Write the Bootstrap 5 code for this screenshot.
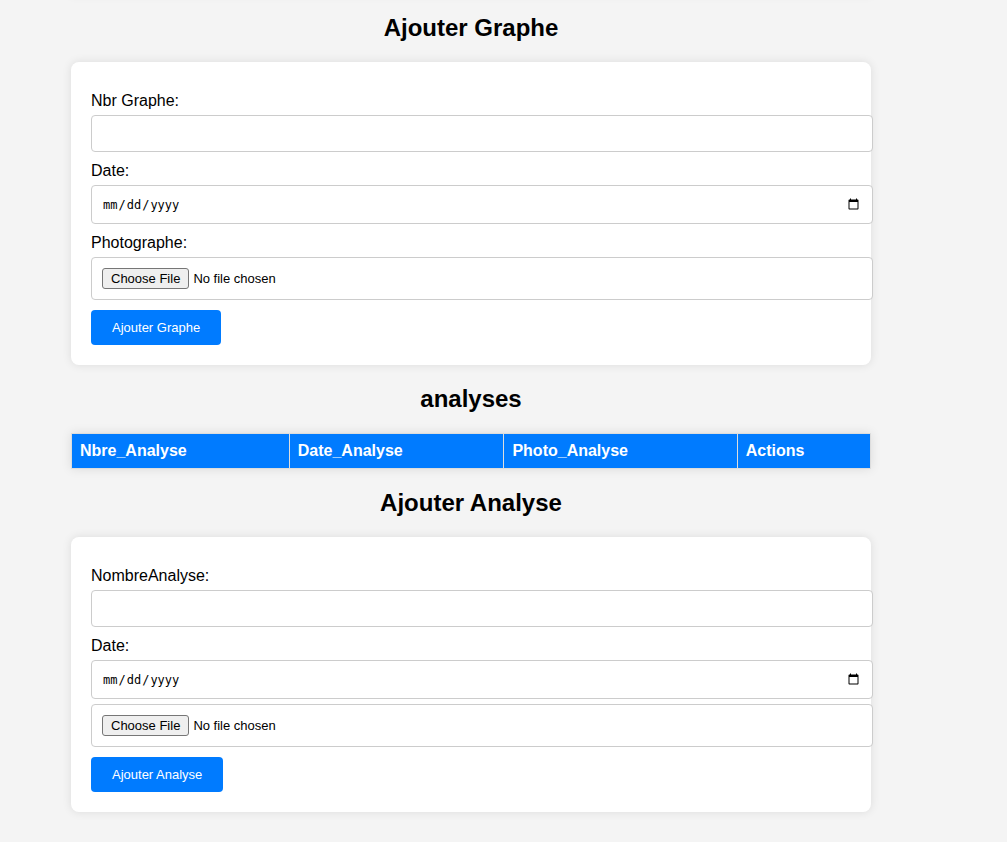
<!DOCTYPE html>
<html lang="fr">
<head>
<meta charset="utf-8">
<meta name="viewport" content="width=device-width, initial-scale=1">
<title>Graphes et analyses</title>
<link href="https://cdn.jsdelivr.net/npm/bootstrap@5.3.0/dist/css/bootstrap.min.css" rel="stylesheet">
<style>
  body { background: #f4f4f4; color: #000; font-family: "Liberation Sans", Arial, sans-serif; font-size: 16px; overflow-x: hidden; }
  .page { padding: 0 136px 0 71px; }
  .panel, .data-grid, .previous-block { box-shadow: 0 0 10px rgba(0, 0, 0, .1); }
  /* bottom of the block scrolled above the view */
  .previous-block { height: 36px; margin: -42px 0 20px; }
  h2 { font-size: 24px; line-height: 28px; font-weight: 700; margin: 0 0 20px; }
  .panel { border: 0; border-radius: 8px; padding: 20px; margin-bottom: 20px; }
  .panel label { line-height: 18px; margin: 10px 0 5px; }
  /* fields keep their padding outside the 100% width */
  .field { box-sizing: content-box; width: 100%; height: 15px; min-height: 0; padding: 10px; border: 1px solid #ccc; border-radius: 4px; font-size: 13px; line-height: 15px; color: #000; }
  .field[type="date"] { height: 17px; font-family: "DejaVu Sans Mono", monospace; font-size: 12px; line-height: 17px; }
  .field[type="date"]::-webkit-datetime-edit { padding: 0; height: 17px; line-height: 19px; }
  .field::-webkit-datetime-edit-month-field, .field::-webkit-datetime-edit-day-field, .field::-webkit-datetime-edit-year-field { padding: 0 1px; }
  .field::-webkit-calendar-picker-indicator { width: 13px; height: 13px; padding: 2px; }
  .field[type="file"] { height: 21px; line-height: 21px; }
  .field + .field { margin-top: 5px; }
  .field[type="file"]::file-selector-button,
  .field[type="file"]:hover:not(:disabled):not([readonly])::file-selector-button { box-sizing: border-box; height: 21px; margin: 0 4px 0 0; padding: 1px 8px; border: 1px solid #767676; border-radius: 3px; background: #efefef; color: #000; font-size: 13px; line-height: 17px; }
  .btn-send { --bs-btn-bg: #007bff; --bs-btn-color: #fff; --bs-btn-hover-bg: #0056b3; --bs-btn-hover-color: #fff; --bs-btn-border-width: 0; --bs-btn-border-radius: 4px; --bs-btn-padding-x: 21px; --bs-btn-padding-y: 10px; --bs-btn-font-size: 13px; --bs-btn-line-height: 15px; margin-top: 10px; }
  .data-grid { width: 100%; border-collapse: collapse; margin-bottom: 20px; }
  .data-grid th { background: #007bff; color: #fff; border: 1px solid #ddd; padding: 8px; line-height: 18px; }
</style>
</head>
<body>
<main class="page">
  <div class="previous-block"></div>

  <h2 class="text-center">Ajouter Graphe</h2>
  <form class="panel card d-block">
    <label class="d-block" for="nbrGraphe">Nbr Graphe:</label>
    <input class="field form-control" type="text" id="nbrGraphe">
    <label class="d-block" for="dateGraphe">Date:</label>
    <input class="field form-control" type="date" id="dateGraphe">
    <label class="d-block" for="photoGraphe">Photographe:</label>
    <input class="field form-control" type="file" id="photoGraphe">
    <button class="btn btn-send" type="submit">Ajouter Graphe</button>
  </form>

  <h2 class="text-center">analyses</h2>
  <table class="data-grid">
    <thead>
      <tr><th>Nbre_Analyse</th><th>Date_Analyse</th><th>Photo_Analyse</th><th>Actions</th></tr>
    </thead>
  </table>

  <h2 class="text-center">Ajouter Analyse</h2>
  <form class="panel card d-block">
    <label class="d-block" for="nombreAnalyse">NombreAnalyse:</label>
    <input class="field form-control" type="text" id="nombreAnalyse">
    <label class="d-block" for="dateAnalyse">Date:</label>
    <input class="field form-control" type="date" id="dateAnalyse">
    <input class="field form-control" type="file" id="photoAnalyse" aria-label="Photo_Analyse">
    <button class="btn btn-send" type="submit">Ajouter Analyse</button>
  </form>
</main>
<script src="https://cdn.jsdelivr.net/npm/bootstrap@5.3.0/dist/js/bootstrap.bundle.min.js"></script>
</body>
</html>
